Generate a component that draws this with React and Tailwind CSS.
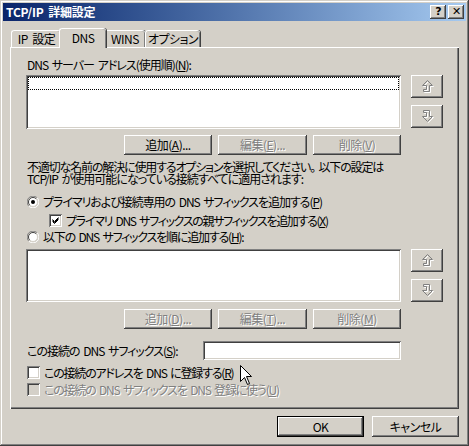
import React from "react";

// classic 3D edges
const raised =
  "shadow-[inset_-1px_-1px_#404040,inset_1px_1px_#ffffff,inset_-2px_-2px_#808080,inset_2px_2px_#d4d0c8]";
const sunken =
  "shadow-[inset_1px_1px_#808080,inset_-1px_-1px_#ffffff,inset_2px_2px_#404040,inset_-2px_-2px_#d4d0c8]";
const disabledText = "text-[#808080] [text-shadow:1px_1px_0_#ffffff]";

const Button = ({ children, disabled, className = "" }) => (
  <div
    className={`flex items-center justify-center bg-[#d4d0c8] ${raised} ${
      disabled ? disabledText : "text-black"
    } ${className}`}
  >
    {children}
  </div>
);

const UpArrow = () => (
  <svg width="13" height="13" viewBox="0 0 13 13">
    <path
      d="M7.5 1.5 L12.5 6.5 L9.5 6.5 L9.5 12.5 L3.5 12.5 L3.5 10.5 L6.5 10.5 L6.5 6.5 L2.5 6.5 Z"
      fill="none"
      stroke="#ffffff"
    />
    <path
      d="M6.5 0.5 L11.5 5.5 L8.5 5.5 L8.5 11.5 L2.5 11.5 L2.5 9.5 L5.5 9.5 L5.5 5.5 L1.5 5.5 Z"
      fill="none"
      stroke="#808080"
    />
  </svg>
);

const DownArrow = () => (
  <svg width="13" height="13" viewBox="0 0 13 13">
    <path
      d="M3.5 1.5 L9.5 1.5 L9.5 7.5 L12.5 7.5 L7.5 12.5 L2.5 7.5 L6.5 7.5 L6.5 3.5 L3.5 3.5 Z"
      fill="none"
      stroke="#ffffff"
    />
    <path
      d="M2.5 0.5 L8.5 0.5 L8.5 6.5 L11.5 6.5 L6.5 11.5 L1.5 6.5 L5.5 6.5 L5.5 2.5 L2.5 2.5 Z"
      fill="none"
      stroke="#808080"
    />
  </svg>
);

const Radio = ({ checked }) => (
  <svg width="12" height="12" viewBox="0 0 12 12" className="shrink-0">
    <circle cx="6" cy="6" r="4.5" fill="#ffffff" />
    <path d="M10.2 1.8 A5.6 5.6 0 0 0 1.8 10.2" fill="none" stroke="#808080" />
    <path d="M1.8 10.2 A5.6 5.6 0 0 0 10.2 1.8" fill="none" stroke="#ffffff" />
    <path d="M9.2 2.8 A4.5 4.5 0 0 0 2.8 9.2" fill="none" stroke="#404040" />
    <path d="M2.8 9.2 A4.5 4.5 0 0 0 9.2 2.8" fill="none" stroke="#d4d0c8" />
    {checked && <circle cx="6" cy="6" r="2" fill="#000000" />}
  </svg>
);

const Checkbox = ({ checked, disabled }) => (
  <div
    className={`relative w-[13px] h-[13px] shrink-0 ${sunken} ${
      disabled ? "bg-[#d4d0c8]" : "bg-white"
    }`}
  >
    {checked && (
      <svg width="13" height="13" viewBox="0 0 13 13" className="absolute left-0 top-0">
        <path d="M3.5 5.5 L5.5 7.5 L9.5 3.5 M3.5 6.5 L5.5 8.5 L9.5 4.5 M3.5 7.5 L5.5 9.5 L9.5 5.5" fill="none" stroke="#000" />
      </svg>
    )}
  </div>
);

const Cursor = () => (
  <svg
    width="13"
    height="21"
    viewBox="0 0 13 21"
    className="absolute left-[240px] top-[365px]"
  >
    <path
      d="M0.5 0.5 L0.5 16.5 L4.5 12.5 L7.5 19.5 L9.5 18.5 L6.5 11.5 L11.5 11.5 Z"
      fill="#ffffff"
      stroke="#000000"
    />
  </svg>
);

const Tab = ({ label, selected, className = "" }) => (
  <div
    className={`relative flex items-center justify-center rounded-t-[3px] bg-[#d4d0c8] border-t border-l border-white shadow-[inset_-1px_0_#808080,1px_0_#404040] ${
      selected ? "h-[20px] z-10 -mb-px pb-[2px]" : "h-[17px]"
    } ${className}`}
  >
    {label}
  </div>
);

export default function App() {
  return (
    <div className="relative w-[469px] h-[446px] bg-[#d4d0c8] p-[3px] text-[12px] leading-[12px] tracking-[-1px] [word-spacing:2px] text-black font-['Noto_Sans_CJK_JP',sans-serif] [font-feature-settings:'palt'] shadow-[inset_-1px_-1px_#404040,inset_1px_1px_#d4d0c8,inset_-2px_-2px_#808080,inset_2px_2px_#ffffff] overflow-hidden">
      {/* title bar */}
      <div className="flex items-center h-[18px] pl-[3px] pr-[2px] bg-gradient-to-r from-[#0a246a] to-[#a6caf0]">
        <span className="text-white font-bold tracking-[-0.2px]">TCP/IP 詳細設定</span>
        <div className="ml-auto flex gap-[2px]">
          <Button className="w-[16px] h-[14px] font-bold font-['DejaVu_Sans',sans-serif] text-[11px]">?</Button>
          <Button className="w-[16px] h-[14px] font-bold font-['DejaVu_Sans',sans-serif] text-[11px]">✕</Button>
        </div>
      </div>

      <div className="px-[7px]">
        {/* tabs */}
        <div className="flex items-end h-[19px] mt-[7px] pl-[1px] tracking-[-0.5px]">
          <Tab label="IP 設定" className="w-[50px]" />
          <Tab label="DNS" selected className="w-[47px] -ml-[2px]" />
          <Tab label="WINS" className="w-[41px] -ml-[2px]" />
          <Tab label="オプション" className="w-[55px]" />
        </div>

        {/* panel */}
        <div className="h-[362px] pl-[16px] shadow-[inset_1px_1px_#ffffff,inset_-1px_-1px_#404040,inset_-2px_-2px_#808080] flex flex-col">
          <div className="mt-[12px] pl-[1px]">
            DNS サーバー アドレス(使用順)(<u>N</u>):
          </div>

          <div className="flex mt-[4px] gap-[10px]">
            <div className={`w-[375px] h-[54px] bg-white p-[2px] ${sunken}`}>
              <div className="h-[13px] border border-dotted border-black" />
            </div>
            <div className="flex flex-col gap-[7px]">
              <Button disabled className="w-[32px] h-[23px]"><UpArrow /></Button>
              <Button disabled className="w-[32px] h-[23px]"><DownArrow /></Button>
            </div>
          </div>

          <div className="flex justify-end gap-[6px] w-[375px] mt-[6px] tracking-[-0.5px]">
            <Button className="w-[88px] h-[20px]">追加(<u>A</u>)...</Button>
            <Button disabled className="w-[89px] h-[20px]">編集(<u>E</u>)...</Button>
            <Button disabled className="w-[88px] h-[20px]">削除(<u>V</u>)</Button>
          </div>

          <div className="mt-[6px] pl-[1px]">
            <div className="tracking-[-1.15px]">不適切な名前の解決に使用するオプションを選択してください。 以下の設定は</div>
            <div>TCP/IP が使用可能になっている接続すべてに適用されます:</div>
          </div>

          <div className="flex items-center gap-[4px] mt-[11px] pl-[1px]">
            <Radio checked />
            <span className="tracking-[-1.05px]">プライマリおよび接続専用の DNS サフィックスを追加する(<u>P</u>)</span>
          </div>

          <div className="flex items-center gap-[4px] mt-[6px] pl-[23px]">
            <Checkbox checked />
            <span className="tracking-[-1.3px]">プライマリ DNS サフィックスの親サフィックスを追加する(<u>X</u>)</span>
          </div>

          <div className="flex items-center gap-[4px] mt-[4px] pl-[1px]">
            <Radio />
            <span className="tracking-[-1.2px]">以下の DNS サフィックスを順に追加する(<u>H</u>):</span>
          </div>

          <div className="flex mt-[6px] gap-[10px]">
            <div className={`w-[375px] h-[53px] bg-white ${sunken}`} />
            <div className="flex flex-col gap-[7px]">
              <Button disabled className="w-[32px] h-[23px]"><UpArrow /></Button>
              <Button disabled className="w-[32px] h-[23px]"><DownArrow /></Button>
            </div>
          </div>

          <div className="flex justify-end gap-[6px] w-[375px] mt-[7px] tracking-[-0.5px]">
            <Button disabled className="w-[88px] h-[20px]">追加(<u>D</u>)...</Button>
            <Button disabled className="w-[89px] h-[20px]">編集(<u>T</u>)...</Button>
            <Button disabled className="w-[88px] h-[20px]">削除(<u>M</u>)</Button>
          </div>

          <div className="flex items-center w-[375px] mt-[12px] pl-[1px]">
            <span>この接続の DNS サフィックス(<u>S</u>):</span>
            <div className={`ml-auto w-[198px] h-[19px] bg-white ${sunken}`} />
          </div>

          <div className="flex items-center gap-[4px] mt-[6px] pl-[1px]">
            <Checkbox />
            <span className="tracking-[-1.2px]">この接続のアドレスを DNS に登録する(<u>R</u>)</span>
          </div>

          <div className="flex items-center gap-[4px] mt-[4px] pl-[1px]">
            <Checkbox disabled />
            <span className={`tracking-[-1.2px] ${disabledText}`}>この接続の DNS サフィックスを DNS 登録に使う(<u>U</u>)</span>
          </div>
        </div>

        {/* dialog buttons */}
        <div className="flex justify-end gap-[8px] mt-[7px] tracking-[-0.5px]">
          <div className="w-[87px] h-[21px] border border-black">
            <Button className="w-full h-full">OK</Button>
          </div>
          <Button className="w-[87px] h-[21px]">キャンセル</Button>
        </div>
      </div>

      <Cursor />
    </div>
  );
}
